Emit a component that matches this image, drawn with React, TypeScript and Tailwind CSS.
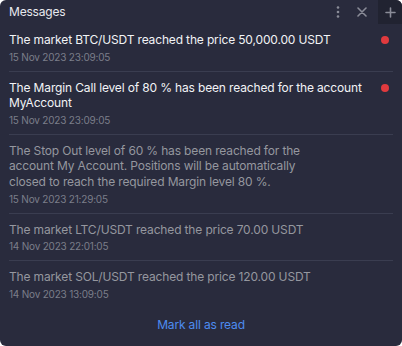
import React from 'react';

interface Message {
  id: number;
  text: React.ReactNode;
  date: string;
  unread: boolean;
}

const messages: Message[] = [
  { id: 1, text: 'The market BTC/USDT reached the price 50,000.00 USDT', date: '15 Nov 2023 23:09:05', unread: true },
  {
    id: 2,
    text: 'The Margin Call level of 80 % has been reached for the account MyAccount',
    date: '15 Nov 2023 23:09:05',
    unread: true,
  },
  {
    id: 3,
    text: (
      <>
        The Stop Out level of 60 % has been reached for the
        <br />
        account My Account. Positions will be automatically
        <br />
        closed to reach the required Margin level 80 %.
      </>
    ),
    date: '15 Nov 2023 21:29:05',
    unread: false,
  },
  { id: 4, text: 'The market LTC/USDT reached the price 70.00 USDT', date: '14 Nov 2023 22:01:05', unread: false },
  { id: 5, text: 'The market SOL/USDT reached the price 120.00 USDT', date: '14 Nov 2023 13:09:05', unread: false },
];

const App: React.FC = () => {
  return (
    <div className="w-[402px] h-[346px] bg-white" style={{ fontFamily: 'Inter, "Noto Sans", sans-serif' }}>
      <div className="h-full bg-[#292b3d] rounded-[6px] overflow-hidden flex flex-col">
        {/* Header */}
        <div className="h-6 flex items-center shrink-0">
          <span className="pl-[9px] text-[12px] leading-none tracking-[-0.2px] text-[#e8e9ee] flex-1">Messages</span>
          <button className="w-5 h-6 flex items-center justify-center mr-[2px]">
            <svg width="4" height="12" viewBox="0 0 4 12" fill="#8a8c98">
              <circle cx="2" cy="1.5" r="1.3" />
              <circle cx="2" cy="6" r="1.3" />
              <circle cx="2" cy="10.5" r="1.3" />
            </svg>
          </button>
          <button className="w-6 h-6 flex items-center justify-center mr-[4px]">
            <svg width="10" height="10" viewBox="0 0 10 10" stroke="#8a8c98" strokeWidth="1.6" strokeLinecap="round">
              <path d="M1 1 L9 9 M9 1 L1 9" />
            </svg>
          </button>
          <button className="w-6 h-6 flex items-center justify-center bg-[#212331]">
            <svg width="11" height="11" viewBox="0 0 11 11" stroke="#8a8c98" strokeWidth="1.6" strokeLinecap="round">
              <path d="M5.5 1 V10 M1 5.5 H10" />
            </svg>
          </button>
        </div>

        {/* List */}
        <div className="flex-1">
          {messages.map((m, i) => (
            <div key={m.id} className={`mx-[9px] ${i < messages.length - 1 ? 'border-b border-[#3a3d50]' : ''}`}>
              <div className="pt-2 pb-2 flex items-start gap-2">
                <div className="flex-1">
                  <div
                    className={`text-[12px] leading-[1.3] tracking-[-0.15px] ${
                      m.unread ? 'text-[#f2f3f6]' : 'text-[#95979f]'
                    }`}
                  >
                    {m.text}
                  </div>
                  <div className="mt-[3px] text-[10px] leading-[1.2] tracking-[-0.2px] text-[#7b7e8a]">{m.date}</div>
                </div>
                {m.unread && <span className="mt-[4px] mr-1 w-2 h-2 rounded-full bg-[#e03a3e] shrink-0" />}
              </div>
            </div>
          ))}
        </div>

        {/* Footer */}
        <div className="h-[34px] pt-[5px] flex justify-center shrink-0">
          <button className="text-[12px] leading-[1.3] tracking-[-0.15px] text-[#4d8cf0] h-4">Mark all as read</button>
        </div>
      </div>
    </div>
  );
};

export default App;
